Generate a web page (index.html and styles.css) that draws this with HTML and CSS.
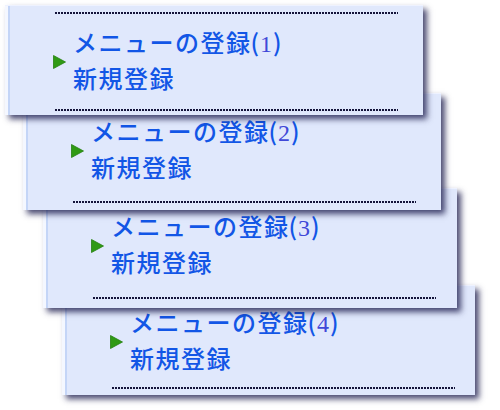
FILE: index.html
```html
<!DOCTYPE html>
<html lang="ja">
<head>
<meta charset="utf-8">
<title>メニューの登録</title>
<link rel="stylesheet" href="styles.css">
</head>
<body>
<div class="stack">
  <div class="panel p1">
    <div class="dots"></div>
    <div class="body">
      <svg class="arrow" width="13" height="14" viewBox="0 0 13 14"><polygon points="0.5,0.5 12.5,7 0.5,13.5" fill="#2f9a14" stroke="#268010" stroke-width="0.8"/></svg>
      <div class="lines">
        <div class="line">メニューの登録<span class="num">(<b>1</b>)</span></div>
        <div class="line">新規登録</div>
      </div>
    </div>
    <div class="dots"></div>
  </div>
  <div class="panel p2">
    <div class="dots"></div>
    <div class="body">
      <svg class="arrow" width="13" height="14" viewBox="0 0 13 14"><polygon points="0.5,0.5 12.5,7 0.5,13.5" fill="#2f9a14" stroke="#268010" stroke-width="0.8"/></svg>
      <div class="lines">
        <div class="line">メニューの登録<span class="num">(<b>2</b>)</span></div>
        <div class="line">新規登録</div>
      </div>
    </div>
    <div class="dots"></div>
  </div>
  <div class="panel p3">
    <div class="dots"></div>
    <div class="body">
      <svg class="arrow" width="13" height="14" viewBox="0 0 13 14"><polygon points="0.5,0.5 12.5,7 0.5,13.5" fill="#2f9a14" stroke="#268010" stroke-width="0.8"/></svg>
      <div class="lines">
        <div class="line">メニューの登録<span class="num">(<b>3</b>)</span></div>
        <div class="line">新規登録</div>
      </div>
    </div>
    <div class="dots"></div>
  </div>
  <div class="panel p4">
    <div class="dots"></div>
    <div class="body">
      <svg class="arrow" width="13" height="14" viewBox="0 0 13 14"><polygon points="0.5,0.5 12.5,7 0.5,13.5" fill="#2f9a14" stroke="#268010" stroke-width="0.8"/></svg>
      <div class="lines">
        <div class="line">メニューの登録<span class="num">(<b>4</b>)</span></div>
        <div class="line">新規登録</div>
      </div>
    </div>
    <div class="dots"></div>
  </div>
</div>
</body>
</html>
```
FILE: styles.css
```css
html, body {
  margin: 0;
  padding: 0;
  background: #ffffff;
}
body {
  width: 500px;
  height: 410px;
  overflow: hidden;
  font-family: "Noto Sans CJK JP", "Noto Sans", sans-serif;
}
.stack {
  display: flex;
  flex-direction: column;
  align-items: flex-start;
  padding: 5px 0 0 5px;
}
.panel {
  box-sizing: border-box;
  display: flex;
  flex-direction: column;
  padding: 6px 0 4px 50px;
  background: linear-gradient(to right, #f4f7ff 0, #f4f7ff 3px, #c4d5f7 3px, #c4d5f7 5px, #e0e8fc 5px);
  border-top: 1px solid #eef2ff;
  box-shadow: 4px 4px 6px rgba(24, 24, 74, 0.78);
}
.p1 { width: 418px; height: 110px; z-index: 4; }
.p2 { width: 418px; height: 117px; z-index: 3; margin: -22px 0 0 18px; padding-bottom: 7px; }
.p3 { width: 414px; height: 120px; z-index: 2; margin: -22px 0 0 38px; padding-bottom: 9px; }
.p4 { width: 413px; height: 110px; z-index: 1; margin: -23px 0 0 57px; padding-bottom: 6px; }
.dots {
  width: 343px;
  height: 2px;
  flex: none;
  background: repeating-linear-gradient(to right, #14143a 0, #14143a 2px, transparent 2px, transparent 3px);
}
.body {
  flex: 1;
  display: flex;
  align-items: flex-start;
  padding-top: 10px;
}
.p2 .body, .p3 .body { padding-top: 11px; }
.arrow {
  display: block;
  flex: none;
  margin: 31px 7px 0 -2px;
}
.lines {
  display: flex;
  flex-direction: column;
}
.line {
  font-size: 24px;
  font-weight: 500;
  line-height: 36px;
  height: 36px;
  letter-spacing: 1.5px;
  color: #1256e6;
  white-space: nowrap;
}
.num {
  letter-spacing: 1px;
  margin-left: -1px;
}
.num b {
  font-family: "Liberation Serif", serif;
  font-weight: normal;
  color: #4048d8;
}
```
